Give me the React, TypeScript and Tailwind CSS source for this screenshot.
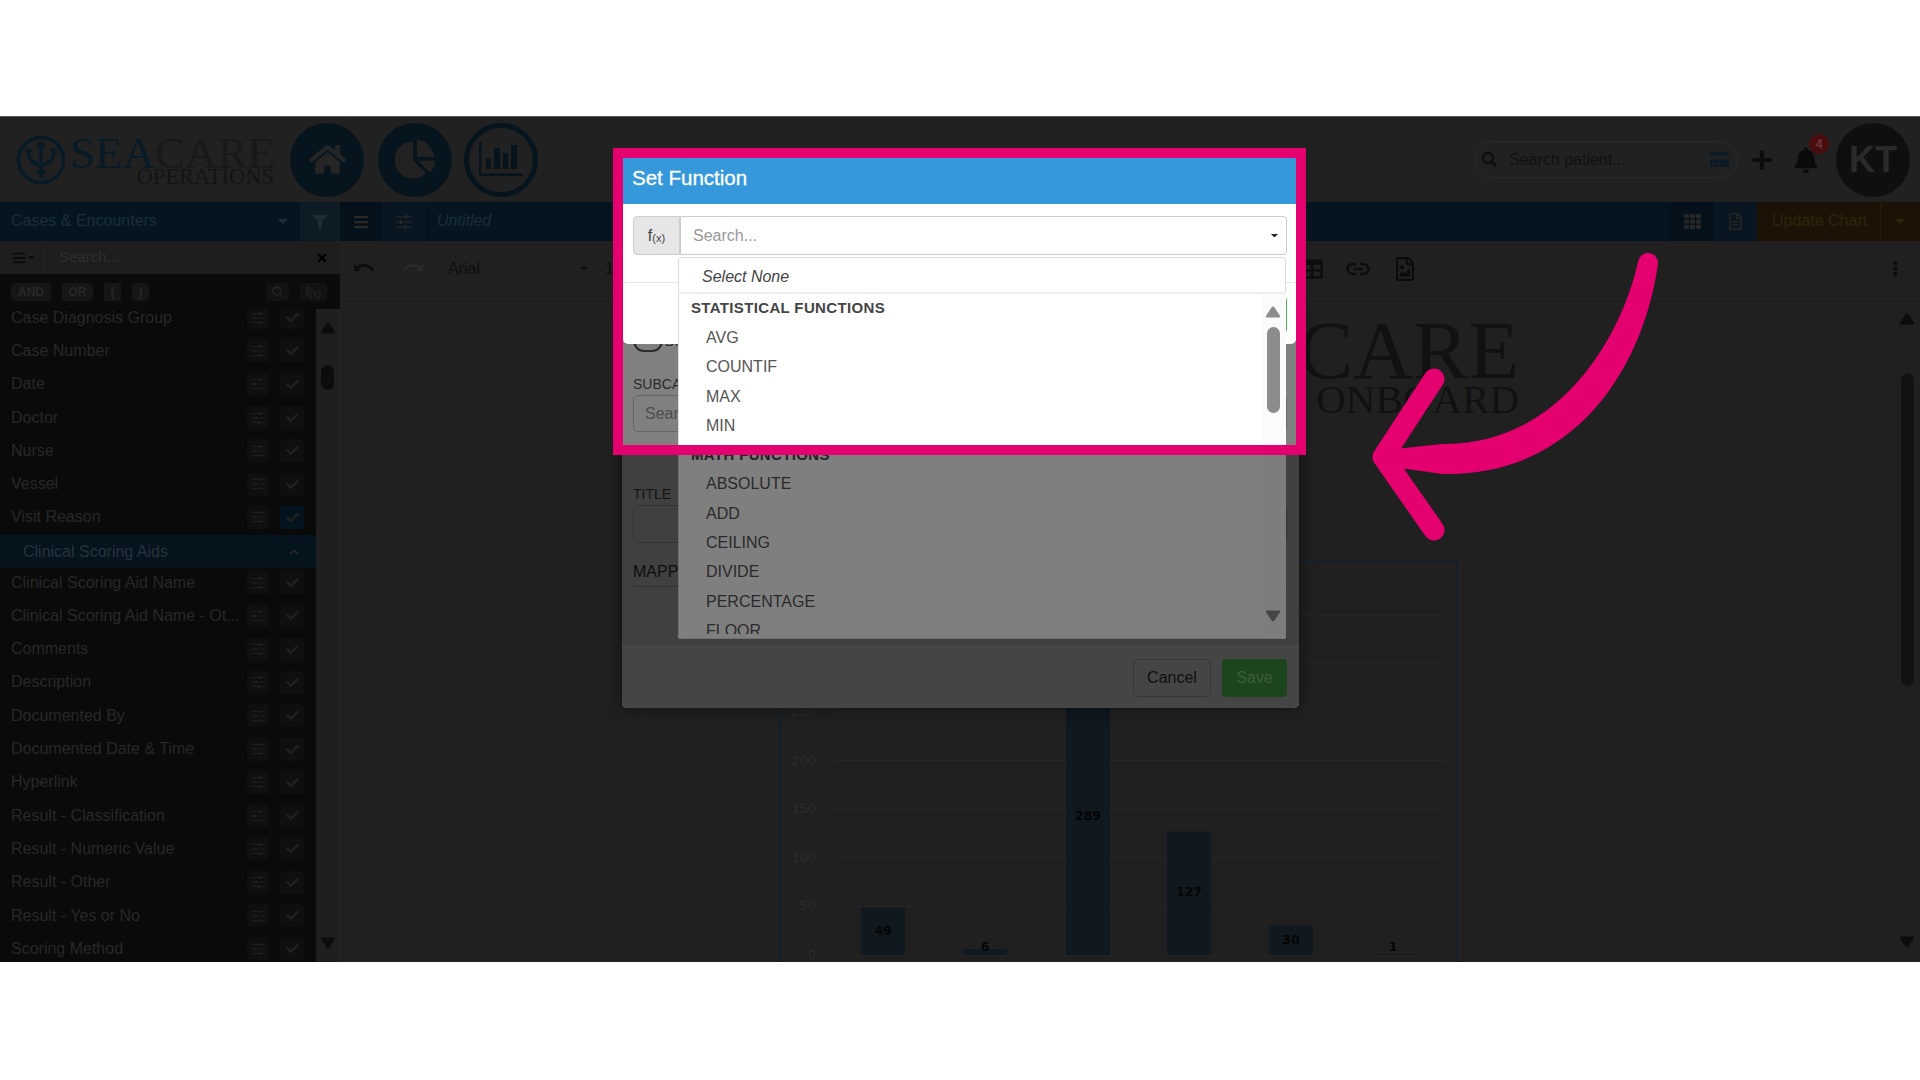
import React from "react";
import { FaHome, FaFilter, FaBars, FaCheck, FaTimes, FaSearch, FaPlus, FaBell, FaCreditCard, FaTh, FaRegFileAlt, FaRegFileImage, FaEllipsisV, FaChevronUp, FaTable } from "react-icons/fa";

const Caret = ({ c, s = 5 }: { c: string; s?: number }) => (
  <svg width={s * 2} height={s} viewBox="0 0 10 5"><path d="M0 0h10L5 5z" fill={c} /></svg>
);
const Tri = ({ c, up }: { c: string; up?: boolean }) => (
  <svg width="16" height="13" viewBox="0 0 16 13"><path d={up ? "M8 1.5c.6 0 1 .3 1.3.8l5.8 8.6c.4.7 0 1.6-.9 1.6H1.8c-.9 0-1.3-.9-.9-1.6l5.8-8.6c.3-.5.7-.8 1.3-.8z" : "M8 11.5c.6 0 1-.3 1.3-.8l5.8-8.6C15.5 1.4 15.1.5 14.2.5H1.8C.9.5.5 1.4.9 2.1l5.8 8.6c.3.5.7.8 1.3.8z"} fill={c} /></svg>
);
const Sliders = ({ c, w = 14 }: { c: string; w?: number }) => (
  <svg width={w} height={w} viewBox="0 0 14 14" fill={c}>
    <rect x="0" y="2" width="14" height="1" /><rect x="0" y="6.500" width="14" height="1" /><rect x="0" y="11" width="14" height="1" />
    <rect x="8" y="0.800" width="2" height="3.400" rx=".5" /><rect x="3.500" y="5.300" width="2" height="3.400" rx=".5" /><rect x="7" y="9.800" width="2" height="3.400" rx=".5" />
  </svg>
);

const group1 = ["Case Diagnosis Group", "Case Number", "Date", "Doctor", "Nurse", "Vessel", "Visit Reason"];
const group2 = ["Clinical Scoring Aid Name", "Clinical Scoring Aid Name - Ot...", "Comments", "Description", "Documented By", "Documented Date & Time", "Hyperlink", "Result - Classification", "Result - Numeric Value", "Result - Other", "Result - Yes or No", "Scoring Method"];

function FieldRow({ label, active }: { label: string; active?: boolean }) {
  return (
    <div className="flex h-[33.300px] items-center pl-[11px] text-[16px] text-[#282828]">
      <span className="w-[230px] whitespace-nowrap">{label}</span>
      <span className="ml-[6px] flex h-[23px] w-[22px] items-center justify-center rounded-[3px] bg-[#0f0f0f]">
        <Sliders c="#1e1e1e" />
      </span>
      <span className={`ml-[11px] flex h-[23px] w-[24px] items-center justify-center rounded-[3px] ${active ? "bg-[#04141e]" : "bg-[#0f0f0f]"} text-[#1f1f1f]`}>
        <FaCheck size={13} />
      </span>
    </div>
  );
}

function Sidebar() {
  return (
    <div className="flex h-full w-[340px] shrink-0 flex-col">
      <div className="flex h-[33px] shrink-0 items-center bg-[#1e1e1e]">
        <span className="flex h-full w-[47px] items-center justify-center gap-[2px] border-r border-[#191919] text-[#0a0a0a]"><FaBars size={14} /><Caret c="#0a0a0a" s={3} /></span>
        <span className="flex-1 pl-[12px] text-[15px] text-[#2e2e2e]">Search...</span>
        <span className="pr-[12px] text-black"><FaTimes size={12} /></span>
      </div>
      <div className="flex h-[35px] shrink-0 items-center bg-[#0b0b0b] pl-[11px] pr-[13px] text-[12px] font-bold text-[#282828]">
        <span className="flex h-[18px] w-[40px] items-center justify-center rounded-[3px] bg-[#161616]">AND</span>
        <span className="ml-[11px] flex h-[18px] w-[31px] items-center justify-center rounded-[3px] bg-[#161616]">OR</span>
        <span className="ml-[11px] flex h-[18px] w-[17px] items-center justify-center rounded-[3px] bg-[#161616]">(</span>
        <span className="ml-[11px] flex h-[18px] w-[17px] items-center justify-center rounded-[3px] bg-[#161616]">)</span>
        <span className="ml-auto flex h-[18px] w-[23px] items-center justify-center rounded-[3px] bg-[#121212]"><FaSearch size={12} className="text-[#1f1f1f]" /></span>
        <span className="ml-[11px] flex h-[18px] w-[27px] items-center justify-center rounded-[3px] bg-[#121212] font-normal">f<sub className="text-[10px]">(x)</sub></span>
      </div>
      <div className="flex min-h-0 flex-1">
        <div className="min-w-0 flex-1 overflow-hidden bg-[#0a0a0a]">
          <div className="-mt-[8px]">
            {group1.map((l) => <FieldRow key={l} label={l} active={l === "Visit Reason"} />)}
            <div className="-mb-[2.200px] mt-[1px] flex h-[33px] items-center justify-between bg-[#04131c] pl-[23px] pr-[17px] text-[16px] text-[#27343d]">
              <span>Clinical Scoring Aids</span>
              <FaChevronUp size={10} className="text-[#2a2a2a]" />
            </div>
            {group2.map((l) => <FieldRow key={l} label={l} />)}
          </div>
        </div>
        <div className="box-border flex w-[24px] shrink-0 flex-col items-center border-r border-[#262626] bg-[#1f1f1f] pt-[12px]">
          <Tri c="#0c0c0c" up />
          <div className="mt-[31px] h-[25px] w-[13px] rounded-full bg-[#0c0c0c]" />
          <div className="mt-auto mb-[12px]"><Tri c="#0c0c0c" /></div>
        </div>
      </div>
    </div>
  );
}

function Chart() {
  const ys = [0, 50, 100, 150, 200, 250, 300];
  const bars = [
    { x: 81, w: 44, v: 49, ly: 373 },
    { x: 183, w: 44, v: 6, ly: 389 },
    { x: 286, w: 44, v: 289, ly: 258 },
    { x: 387, w: 44, v: 127, ly: 334 },
    { x: 489, w: 44, v: 30, ly: 382 },
    { x: 591, w: 44, v: 1, ly: 389 },
  ];
  return (
    <svg width="678" height="402" className="box-border shrink-0 border-x border-t border-[#0a2030]">
      {[...ys, 350].map((y, i) => (
        <line key={y} x1="53" x2="666" y1={393 - i * 48.6} y2={393 - i * 48.6} stroke="#272727" />
      ))}
      {ys.map((y, i) => (
        <text key={y} x="36" y={397 - i * 48.6} textAnchor="end" fontSize="13" fontFamily="DejaVu Sans, sans-serif" fill="#2c2c2c">{y}</text>
      ))}
      {bars.map((b) => (
        <g key={b.v}>
          <rect x={b.x} y={393 - b.v * 0.972} width={b.w} height={b.v * 0.972} fill="#101820" />
          <text x={b.x + b.w / 2} y={b.ly} textAnchor="middle" fontSize="12.5" fontWeight="bold" fontFamily="DejaVu Sans, sans-serif" fill="#050505">{b.v}</text>
        </g>
      ))}
    </svg>
  );
}

function Main() {
  return (
    <div className="flex h-full min-w-0 flex-1 flex-col bg-[#202020]">
      <div className="flex h-[58px] shrink-0 items-center border-b border-[#272727] pb-[2px] text-[#0e0e0e]">
        <svg width="22" height="13" viewBox="0 0 22 13" className="ml-[13px]"><path d="M1 2v7h7L5.4 6.6C7 5.4 9 4.800 11 4.800c3.400 0 6.300 1.800 8 4.600l2-1.400C19 4.500 15.300 2 11 2 8.300 2 5.800 3 3.800 4.700z" fill="#0c0c0c" /></svg>
        <svg width="22" height="13" viewBox="0 0 22 13" className="ml-[27px]"><path d="M21 2v7h-7l2.600-2.400C15 5.400 13 4.800 11 4.800c-3.400 0-6.300 1.800-8 4.600L1 8c2-3.500 5.700-6 10-6 2.700 0 5.200 1 7.200 2.700z" fill="#2a2a2a" /></svg>
        <span className="ml-[24px] w-[132px] text-[16px] text-[#0e0e0e]">Arial</span>
        <Caret c="#0e0e0e" s={4} />
        <span className="ml-[17px] text-[16px]">14</span>
        <span className="ml-[678px] text-[#0d0d0d]"><FaTable size={22} /></span>
        <svg width="24" height="14" viewBox="0 0 24 14" fill="none" stroke="#0c0c0c" strokeWidth="2.400" className="ml-[23px]"><path d="M10 2H6.500a5 5 0 0 0 0 10H10M14 2h3.500a5 5 0 0 1 0 10H14M7 7h10" /></svg>
        <span className="ml-[23px] text-[#0c0c0c]"><FaRegFileImage size={24} /></span>
        <span className="ml-auto mr-[17px] text-[#0c0c0c]"><FaEllipsisV size={15} /></span>
      </div>
      <div className="flex min-h-0 flex-1">
        <div className="min-w-0 flex-1 overflow-hidden">
          <div className="ml-[702px] mt-[17px] w-[477px] text-right font-['Liberation_Serif',serif] text-[#111111]">
            <div className="h-[64px] text-[83px] leading-[68px]">SEACARE</div>
            <div className="mt-[-3px] h-[36px] text-[41px] leading-[44px]">ONBOARD</div>
          </div>
          <div className="ml-[439px] mt-[148px]"><Chart /></div>
        </div>
        <div className="flex w-[22px] shrink-0 flex-col items-center pr-[4px] pt-[13px]">
          <Tri c="#0c0c0c" up />
          <div className="mt-[48px] h-[313px] w-[13px] rounded-full bg-[#121212]" />
          <div className="mt-auto mb-[13px]"><Tri c="#0c0c0c" /></div>
        </div>
      </div>
    </div>
  );
}

function Header() {
  return (
    <div className="flex h-[85px] shrink-0 items-center bg-[#212121] pl-[16px]">
      <svg width="50" height="50" viewBox="0 0 50 50" fill="none" stroke="#071a27" strokeWidth="3.500" className="shrink-0">
        <circle cx="25" cy="25" r="22.500" />
        <path d="M25 7v36M25 7l-3 5M25 7l3 5M12 14c0 10 5 15 13 16 8-1 13-6 13-16M12 14l-2 4M12 14l3 3M38 14l2 4M38 14l-3 3M20 37h10" />
      </svg>
      <div className="ml-[4px] w-[204px] font-['Liberation_Serif',serif]">
        <div className="mt-[4px] h-[30px] whitespace-nowrap text-[45px] leading-[36px]"><span className="text-[#071a27]">SEA</span><span className="text-[#191919]">CARE</span></div>
        <div className="text-right text-[22.500px] leading-[24px] text-[#141414]">OPERATIONS</div>
      </div>
      <span className="ml-[16px] flex h-[74px] w-[74px] shrink-0 items-center justify-center rounded-full bg-[#05141d] text-[#252525]"><FaHome size={37} /></span>
      <span className="ml-[14px] flex h-[74px] w-[74px] shrink-0 items-center justify-center rounded-full bg-[#05141d]">
        <svg width="40" height="40" viewBox="0 0 40 40" fill="#222222"><path d="M18 1.500A18.500 18.500 0 1 0 31 33L18 20z" /><path d="M22 0a18 18 0 0 1 17 17H22z" /><path d="M23 20.500h17a18 18 0 0 1-5 12z" /></svg>
      </span>
      <span className="ml-[12px] flex h-[74px] w-[74px] shrink-0 items-center justify-center rounded-full border-[5px] border-[#05141d]">
        <svg width="46" height="36" viewBox="0 0 46 36" fill="#05141d"><path d="M1 0h2.500v31.500H45V34H1z" /><rect x="8" y="16" width="5" height="11" /><rect x="16" y="6" width="6" height="21" /><rect x="25" y="11" width="5" height="16" /><rect x="33" y="3" width="6" height="24" /></svg>
      </span>
      <div className="ml-auto mr-[10px] flex items-center">
        <div className="flex h-[37px] w-[264px] items-center rounded-full border border-[#2a2a2a] pl-[7px] pr-[8px] text-[#0e0e0e]">
          <FaSearch size={15} />
          <span className="ml-[12px] flex-1 text-[16px] text-[#111111]">Search patient...</span>
          <FaCreditCard size={19} className="text-[#091a26]" />
        </div>
        <span className="ml-[13px] text-[#0b0b0b]"><FaPlus size={22} /></span>
        <span className="relative ml-[20px] text-[#0b0b0b]">
          <FaBell size={26} />
          <span className="absolute -right-[10px] -top-[13px] flex h-[20px] w-[20px] items-center justify-center rounded-full bg-[#4a0d0d] text-[12px] font-bold text-[#6a3a3a]">4</span>
        </span>
        <span className="ml-[17px] flex h-[74px] w-[74px] items-center justify-center rounded-full bg-[#0f0f0f] text-[36px] font-bold text-[#2a2a2a]">KT</span>
      </div>
    </div>
  );
}

function BlueBar() {
  return (
    <div className="flex h-[39px] shrink-0 items-stretch bg-[#05151f]">
      <div className="flex w-[300px] items-center justify-between pb-[1px] pl-[11px] pr-[12px] text-[16px] text-[#1c2d39]"><span>Cases &amp; Encounters</span><Caret c="#1d2e38" /></div>
      <div className="flex w-[40px] items-center justify-center bg-[#0d1b24] text-[#202d36]"><FaFilter size={14} /></div>
      <div className="flex w-[42px] items-center justify-center bg-[#04101a] text-[#282828]"><FaBars size={16} /></div>
      <div className="flex w-[44px] items-center justify-center bg-[#071621]"><Sliders c="#282828" w={16} /></div>
      <div className="flex flex-1 items-center pb-[1px] pl-[11px] text-[16px] italic text-[#1c2d39]">Untitled</div>
      <div className="flex w-[44px] items-center justify-center bg-[#04101a] text-[#262626]"><FaTh size={17} /></div>
      <div className="flex w-[43px] items-center justify-center bg-[#071621] text-[#262626]"><FaRegFileAlt size={17} /></div>
      <div className="flex w-[163px] items-center bg-[#1c1306] pb-[1px] text-[16px] text-[#30230e]">
        <span className="w-[124px] border-r border-[#261a09] py-[10px] pl-[15px]">Update Chart</span>
        <span className="ml-[14px]"><Caret c="#30230e" /></span>
      </div>
    </div>
  );
}

function BackModal() {
  return (
    <div className="absolute left-[622px] top-[300px] flex h-[408px] w-[677px] flex-col rounded-[5px] bg-[#808080] text-[#2a2a2a] shadow-[0_0_16px_rgba(0,0,0,0.5)]">
      <div className="h-[347px] shrink-0 overflow-hidden border-b border-[#999999] pl-[11px] pr-[12px] pt-[30px]">
        <div className="flex h-[22px] items-center gap-[2px] text-[14px]">
          <span className="h-[22px] w-[30px] rounded-full border-2 border-[#2a2a2a]" />
          <span>Dimension</span>
        </div>
        <div className="mt-[22px] text-[14px] leading-[20px]">SUBCATEGORY</div>
        <div className="mt-[1px] flex h-[37px] items-center rounded-[5px] border border-[#666666] pl-[11px] text-[16px] text-[#4d4d4d]">Search...</div>
        <div className="mt-[52px] text-[14px] leading-[20px]">TITLE</div>
        <div className="mt-[1px] h-[38px] rounded-[5px] border border-[#666666]" />
        <div className="mt-[19px] border-b border-[#666666] pb-[4px] text-[16px] leading-[20px] text-[#1a1a1a]">MAPPING</div>
      </div>
      <div className="flex flex-1 items-start justify-end gap-[11px] rounded-b-[5px] bg-[#8a8a8a] pr-[12px] pt-[12px] text-[16px]">
        <span className="flex h-[38px] w-[78px] items-center justify-center rounded-[4px] border border-[#6f6f6f] text-[#1f1f1f]">Cancel</span>
        <span className="flex h-[38px] w-[65px] items-center justify-center rounded-[4px] bg-[#38883a] text-[#7ab87a]">Save</span>
      </div>
      <div className="absolute inset-x-0 bottom-0 top-[155px] rounded-b-[5px] bg-black/50" />
    </div>
  );
}

function FrontModal() {
  return (
    <div className="absolute left-[623px] top-[158px] flex h-[186px] w-[673px] flex-col rounded-b-[5px] bg-white">
      <div className="flex h-[46px] shrink-0 items-center bg-[#3498db] pb-[5px] pl-[9px] text-[20.500px] text-white [-webkit-text-stroke:0.3px_white]">Set Function</div>
      <div className="flex h-[79px] shrink-0 border-b border-[#e5e5e5] pl-[10px] pr-[9.500px] pt-[12px]">
        <span className="flex h-[39px] w-[47px] items-center justify-center rounded-l-[4px] border border-[#cccccc] bg-[#e6e6e6] text-[16px] text-[#444444]">f<sub className="text-[11px]">(x)</sub></span>
        <div className="flex h-[39px] flex-1 items-center justify-between rounded-r-[4px] border border-[#cccccc] pl-[12px] pr-[8px] text-[16px] text-[#999999]">
          <span>Search...</span><Caret c="#222222" s={3.500} />
        </div>
      </div>
      <div className="flex flex-1 justify-end pr-[9.500px] pt-[14px]">
        <span className="h-[36px] w-[65px] rounded-[4px] bg-[#4caf50]" />
      </div>
    </div>
  );
}

function Dropdown() {
  const Item = ({ t }: { t: string }) => <div className="flex h-[29.300px] items-center pl-[28px] text-[16px] text-[#555555]">{t}</div>;
  const Head = ({ t }: { t: string }) => <div className="flex h-[29.300px] items-center pl-[13px] text-[15px] font-bold tracking-[0.35px] text-[#444444]">{t}</div>;
  return (
    <div className="absolute left-[678px] top-[257px] h-[382px] w-[608px] overflow-hidden rounded-[4px] bg-white shadow-[inset_0_0_0_1px_#dddddd]">
      <div className="flex h-[37px] items-center border-b-2 border-[#eeeeee] pl-[24px] pt-[4px] text-[16px] italic text-[#444444]">Select None</div>
      <div className="flex h-[340px]">
        <div className="min-w-0 flex-1 overflow-hidden">
          <Head t="STATISTICAL FUNCTIONS" />
          {["AVG", "COUNTIF", "MAX", "MIN"].map((t) => <Item key={t} t={t} />)}
          <Head t="MATH FUNCTIONS" />
          {["ABSOLUTE", "ADD", "CEILING", "DIVIDE", "PERCENTAGE", "FLOOR"].map((t) => <Item key={t} t={t} />)}
        </div>
        <div className="flex w-[24px] shrink-0 flex-col items-center bg-[#fbfbfb] pr-[2px] pt-[11px]">
          <Tri c="#8c8c8c" up />
          <div className="mt-[9px] h-[86px] w-[13px] rounded-full bg-[#8c8c8c]" />
          <div className="mt-auto mb-[11px]"><Tri c="#8c8c8c" /></div>
        </div>
      </div>
      <div className="absolute inset-x-0 bottom-0 top-[198px] bg-black/50" />
    </div>
  );
}

function Arrow() {
  return (
    <svg className="pointer-events-none absolute left-0 top-0" width="1920" height="1080" viewBox="0 0 1920 1080" fill="#e5006f">
      <path d="M1638 262C1622 335 1560 446 1442 444L1386 450L1386 466L1442 474C1570 477 1642 375 1658 264A10 10 0 0 0 1638 262Z" />
      <path d="M1434 379L1383 457L1434 530" fill="none" stroke="#e5006f" strokeWidth="21" strokeLinecap="round" strokeLinejoin="round" />
    </svg>
  );
}

export default function App() {
  return (
    <div className="relative h-[1080px] w-[1920px] overflow-hidden bg-white font-['Liberation_Sans',Arial,sans-serif]">
      <div className="h-[116px]" />
      <div className="flex h-[846px] flex-col overflow-hidden border-t border-[#555555] bg-[#202020]">
        <Header />
        <BlueBar />
        <div className="flex min-h-0 flex-1">
          <Sidebar />
          <Main />
        </div>
      </div>
      <BackModal />
      <FrontModal />
      <Dropdown />
      <div className="pointer-events-none absolute left-[613px] top-[148px] h-[307px] w-[693px] border-[10px] border-[#e5006f]" />
      <Arrow />
    </div>
  );
}
